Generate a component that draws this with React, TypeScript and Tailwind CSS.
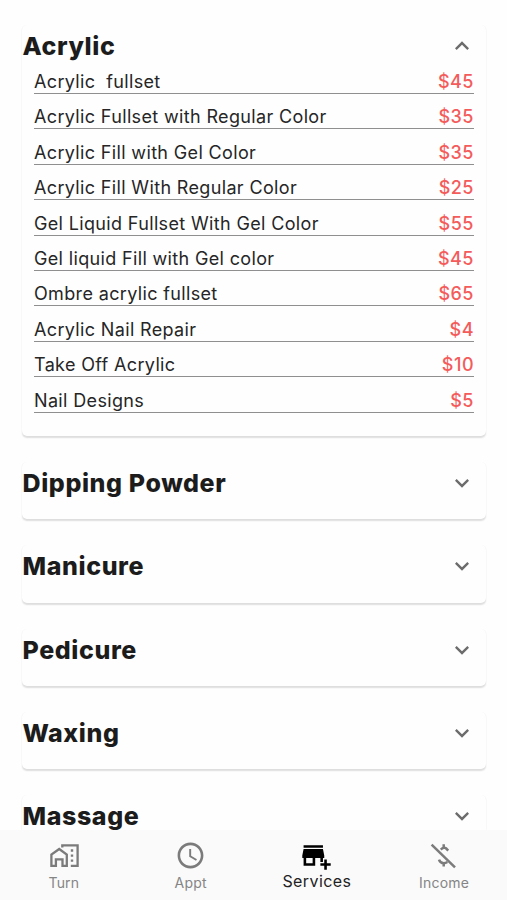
import React from "react";
import { MdAddBusiness, MdExpandLess, MdExpandMore, MdSchedule } from "react-icons/md";

const services = [
  { name: "Acrylic  fullset", price: "$45" },
  { name: "Acrylic Fullset with Regular Color", price: "$35" },
  { name: "Acrylic Fill with Gel Color", price: "$35" },
  { name: "Acrylic Fill With Regular Color", price: "$25" },
  { name: "Gel Liquid Fullset With Gel Color", price: "$55" },
  { name: "Gel liquid Fill with Gel color", price: "$45" },
  { name: "Ombre acrylic fullset", price: "$65" },
  { name: "Acrylic Nail Repair", price: "$4" },
  { name: "Take Off Acrylic", price: "$10" },
  { name: "Nail Designs", price: "$5" },
];

const collapsed = ["Dipping Powder", "Manicure", "Pedicure", "Waxing", "Massage"];

function HomeWorkIcon({ className }: { className?: string }) {
  return (
    <svg viewBox="0 0 31 31" fill="none" stroke="currentColor" strokeWidth="2.3" className={className}>
      <path d="M3.4 25.8V14.6L11.2 9l7.6 5.6v11.2h-4.3v-6.4H7.9v6.4z" />
      <path d="M14.3 7.4V5.4H29.6v20.4H22.8" />
      <path d="M22.8 10.5h2.4M22.8 15.6h2.4M22.8 20.7h2.4" />
    </svg>
  );
}

function MoneyOffIcon({ className }: { className?: string }) {
  return (
    <svg viewBox="0 0 31 31" fill="none" stroke="currentColor" strokeWidth="2.5" className={className}>
      <path d="M3.6 4.6 27 27.4" />
      <path d="M15.7 4.2v3.4M12.8 9.6q2.8-3 5.2-1.3l2.2 2.3" />
      <path d="M11 19.6q1.2 3.6 4.7 3.6 2 0 3.7-1.2M15.7 23v3.6" />
    </svg>
  );
}

const tabs = [
  { label: "Turn", Icon: HomeWorkIcon, active: false },
  { label: "Appt", Icon: MdSchedule, active: false },
  { label: "Services", Icon: MdAddBusiness, active: true },
  { label: "Income", Icon: MoneyOffIcon, active: false },
];

const cardClass =
  "shrink-0 rounded-[5px] bg-[#fefefe] shadow-[0_1.5px_1.5px_rgba(0,0,0,0.13),0_0_1px_rgba(0,0,0,0.03)]";

function Heading({ title, open }: { title: string; open?: boolean }) {
  const Chevron = open ? MdExpandLess : MdExpandMore;
  return (
    <div className="flex h-8 items-center justify-between pr-2.5 pl-[0.5px]">
      <h2 className="text-[25px] leading-8 font-extrabold tracking-[0.6px] text-[#1c1c1c]">{title}</h2>
      <Chevron className="size-7 text-[#6c6c6c]" />
    </div>
  );
}

export default function App() {
  return (
    <div className="flex h-[900px] w-[507px] flex-col overflow-hidden bg-[#fefefe] font-['Inter','Liberation_Sans',sans-serif]">
      <main className="flex min-h-0 flex-1 flex-col gap-[26px] overflow-hidden pt-[25px] pr-[21px] pl-[22px]">
        <section className={`${cardClass} h-[411.4px] pt-[5px]`}>
          <Heading title="Acrylic" open />
          <ul className="px-3">
            {services.map((s) => (
              <li
                key={s.name}
                className="flex h-[35.4px] items-end justify-between border-b-[1.5px] border-[#8f8f8f] text-[18px] leading-[22px] tracking-[0.35px] first:h-[32px]"
              >
                <span className="whitespace-pre text-[#262626]">{s.name}</span>
                <span className="font-medium tracking-[0.5px] text-[#f45b5b]">{s.price}</span>
              </li>
            ))}
          </ul>
        </section>
        {collapsed.map((title) => (
          <section key={title} className={`${cardClass} h-[57.1px] pt-[5px]`}>
            <Heading title={title} />
          </section>
        ))}
      </main>
      <nav className="grid h-[70px] shrink-0 grid-cols-4 bg-[#fafafa]">
        {tabs.map(({ label, Icon, active }) => (
          <div
            key={label}
            className={`flex flex-col items-center pt-[10px] ${active ? "text-black" : "text-[#7b7b7b]"}`}
          >
            <Icon className="size-[31px]" />
            <span
              className={
                active
                  ? "text-[16px] leading-5 tracking-[0.4px] text-[#222]"
                  : "pt-[2px] pl-px text-[14px] leading-5 tracking-[0.2px] text-[#858585]"
              }
            >
              {label}
            </span>
          </div>
        ))}
      </nav>
    </div>
  );
}
